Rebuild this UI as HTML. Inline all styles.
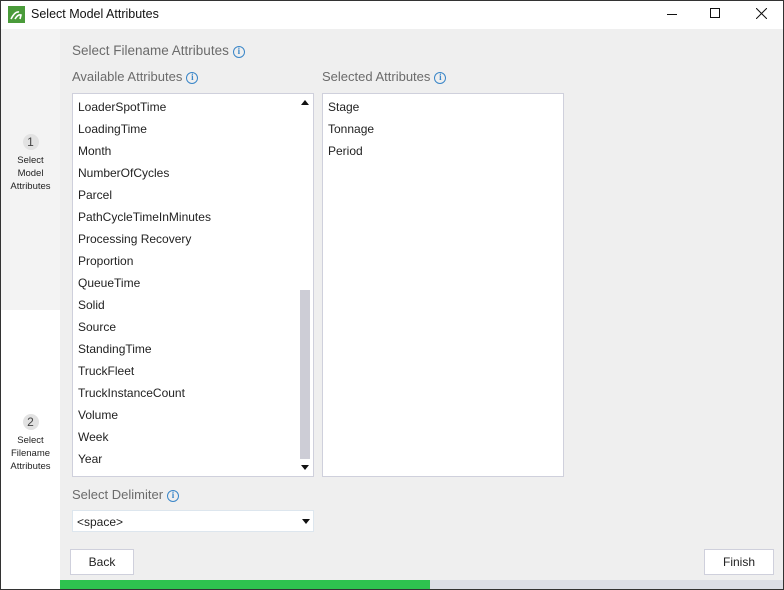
<!DOCTYPE html>
<html><head><style>
*{margin:0;padding:0;box-sizing:border-box}
body{width:784px;height:590px;overflow:hidden;font-family:"Liberation Sans",sans-serif;background:#fff;position:relative}
.win{position:absolute;left:0;top:0;width:784px;height:590px;border:1px solid #333;}
.title{position:absolute;left:1px;top:1px;width:782px;height:28px;background:#fff;}
.abs{position:absolute}
.side1{position:absolute;left:1px;top:29px;width:59px;height:281px;background:#f3f3f3}
.side2{position:absolute;left:1px;top:310px;width:59px;height:279px;background:#fff}
.main{position:absolute;left:60px;top:29px;width:723px;height:560px;background:#efefef}
.lbl{position:absolute;color:#6b6b6b;font-size:13.5px}
.info{display:inline-block;width:12px;height:12px;border:1.3px solid #3a86c8;border-radius:50%;color:#3a86c8;font-size:9px;line-height:9.5px;text-align:center;font-weight:bold;vertical-align:1px;margin-left:4px;font-family:"Liberation Serif",serif}
.box{position:absolute;background:#fff;border:1px solid #cfd0dc}
.item{position:absolute;left:5px;font-size:12px;color:#222}
.step{position:absolute;width:59px;text-align:center;font-size:9.5px;color:#222;line-height:13px}
.circ{width:16px;height:16px;border-radius:50%;background:#e2e2e2;margin:0 auto 4px;font-size:12px;line-height:16px;color:#444}
.btn{position:absolute;background:#fff;border:1px solid #cfd0dc;font-size:12px;color:#222;text-align:center;line-height:24px}
</style></head><body>
<div class="win"></div>
<div class="title">
 <div class="abs" style="left:7px;top:5px;width:17px;height:17px;background:#4a9b3a"></div>
 <svg class="abs" style="left:7px;top:5px" width="17" height="17"><path d="M3 13 Q7 5 11 6 M7 13 Q10 8 13 9 L12 13" stroke="#fff" stroke-width="1.6" fill="none"/></svg>
 <div class="abs" style="left:30px;top:6px;font-size:12.5px;color:#111">Select Model Attributes</div>
 <div class="abs" style="left:666px;top:13px;width:10px;height:1px;background:#111"></div>
 <div class="abs" style="left:709px;top:7px;width:10px;height:10px;border:1px solid #111"></div>
 <svg class="abs" style="left:755px;top:7px" width="11" height="11"><path d="M0 0L11 11M11 0L0 11" stroke="#111" stroke-width="1"/></svg>
</div>
<div class="side1"></div><div class="side2"></div>
<div class="main"></div>
<div class="step" style="left:1px;top:134px"><div class="circ">1</div>Select<br>Model<br>Attributes</div>
<div class="step" style="left:1px;top:414px"><div class="circ">2</div>Select<br>Filename<br>Attributes</div>
<div class="lbl" style="left:72px;top:43px">Select Filename Attributes<span class="info">i</span></div>
<div class="lbl" style="left:72px;top:69px;font-size:13px">Available Attributes<span class="info">i</span></div>
<div class="lbl" style="left:322px;top:69px;font-size:13px">Selected Attributes<span class="info">i</span></div>
<div class="box" style="left:72px;top:93px;width:242px;height:384px">
 <div class="abs" style="left:227px;top:196px;width:10px;height:169px;background:#cdcdd6"></div>
 <svg class="abs" style="left:227px;top:5px" width="10" height="8"><path d="M1 6L5 1L9 6Z" fill="#111"/></svg>
 <svg class="abs" style="left:227px;top:370px" width="10" height="8"><path d="M1 1L5 6L9 1Z" fill="#111"/></svg>
 <div class="item" style="top:6px">LoaderSpotTime</div>
 <div class="item" style="top:28px">LoadingTime</div>
 <div class="item" style="top:50px">Month</div>
 <div class="item" style="top:72px">NumberOfCycles</div>
 <div class="item" style="top:94px">Parcel</div>
 <div class="item" style="top:116px">PathCycleTimeInMinutes</div>
 <div class="item" style="top:138px">Processing Recovery</div>
 <div class="item" style="top:160px">Proportion</div>
 <div class="item" style="top:182px">QueueTime</div>
 <div class="item" style="top:204px">Solid</div>
 <div class="item" style="top:226px">Source</div>
 <div class="item" style="top:248px">StandingTime</div>
 <div class="item" style="top:270px">TruckFleet</div>
 <div class="item" style="top:292px">TruckInstanceCount</div>
 <div class="item" style="top:314px">Volume</div>
 <div class="item" style="top:336px">Week</div>
 <div class="item" style="top:358px">Year</div>
</div>
<div class="box" style="left:322px;top:93px;width:242px;height:384px">
 <div class="item" style="top:6px">Stage</div>
 <div class="item" style="top:28px">Tonnage</div>
 <div class="item" style="top:50px">Period</div>
</div>
<div class="lbl" style="left:72px;top:487px;font-size:13px">Select Delimiter<span class="info">i</span></div>
<div class="box" style="left:72px;top:510px;width:242px;height:22px;border-color:#dde6ee">
 <div class="item" style="top:4px;left:4px">&lt;space&gt;</div>
 <svg class="abs" style="left:229px;top:8px" width="8" height="6"><path d="M0 0L4 5L8 0Z" fill="#111"/></svg>
</div>
<div class="btn" style="left:70px;top:549px;width:64px;height:26px">Back</div>
<div class="btn" style="left:704px;top:549px;width:70px;height:26px">Finish</div>
<div class="abs" style="left:60px;top:580px;width:370px;height:9px;background:#2ec24f"></div>
<div class="abs" style="left:430px;top:580px;width:353px;height:9px;background:#dcdee6"></div>
</body></html>
